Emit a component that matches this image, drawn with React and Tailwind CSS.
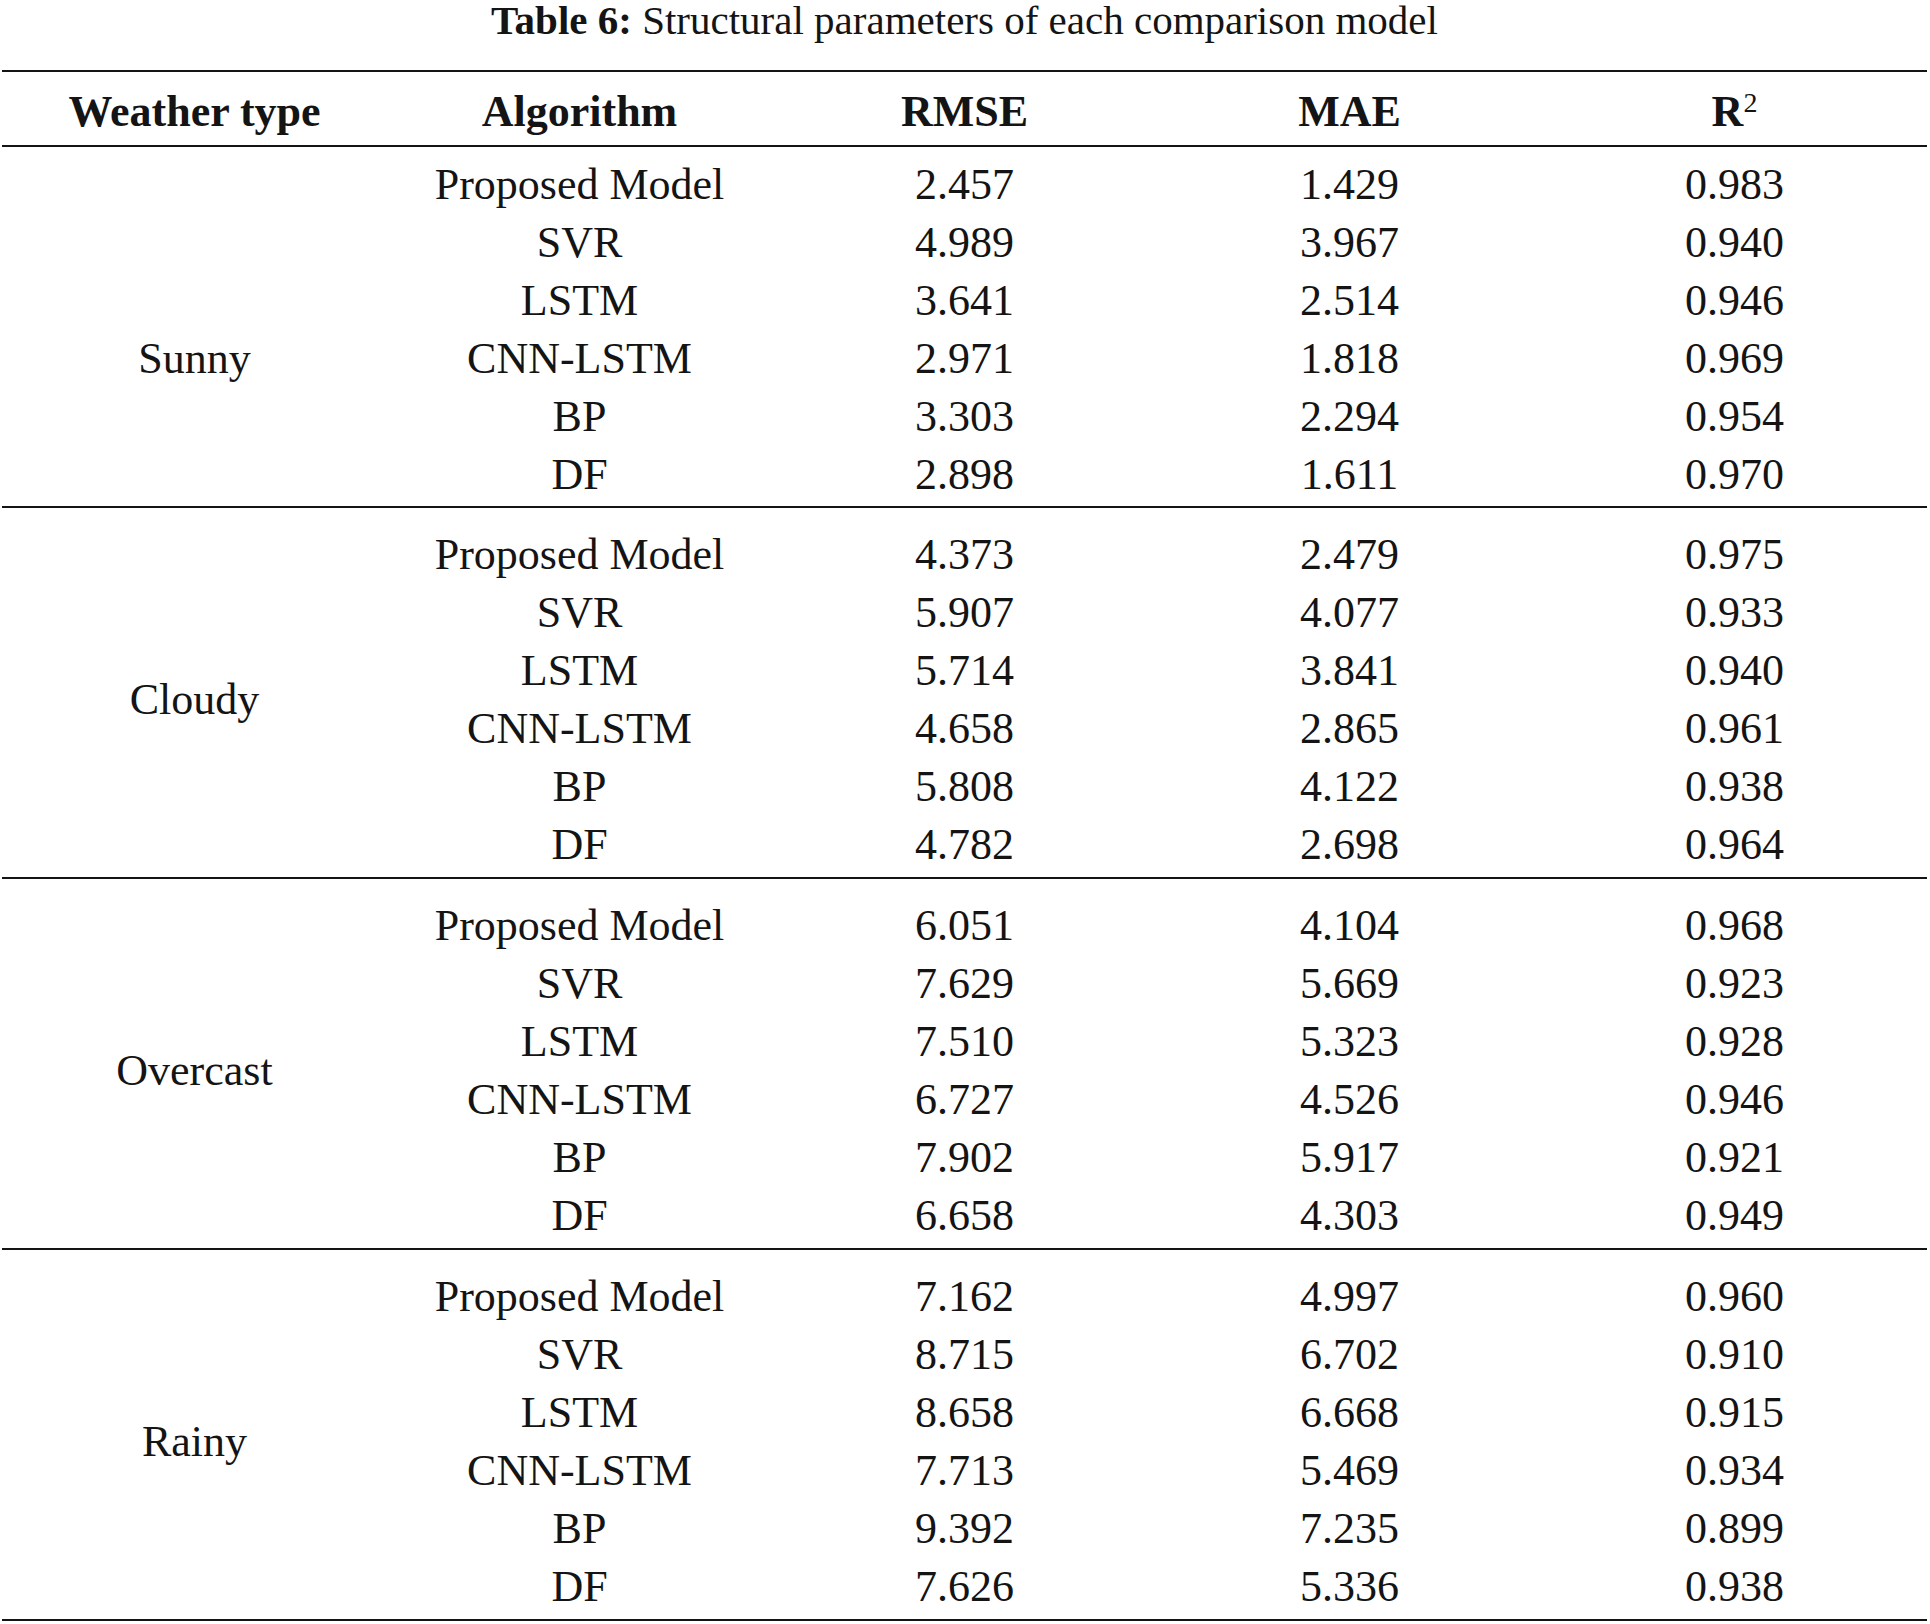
import React from "react";

const groups = [
  {
    name: "Sunny",
    rows: [
      ["Proposed Model", "2.457", "1.429", "0.983"],
      ["SVR", "4.989", "3.967", "0.940"],
      ["LSTM", "3.641", "2.514", "0.946"],
      ["CNN-LSTM", "2.971", "1.818", "0.969"],
      ["BP", "3.303", "2.294", "0.954"],
      ["DF", "2.898", "1.611", "0.970"],
    ],
  },
  {
    name: "Cloudy",
    rows: [
      ["Proposed Model", "4.373", "2.479", "0.975"],
      ["SVR", "5.907", "4.077", "0.933"],
      ["LSTM", "5.714", "3.841", "0.940"],
      ["CNN-LSTM", "4.658", "2.865", "0.961"],
      ["BP", "5.808", "4.122", "0.938"],
      ["DF", "4.782", "2.698", "0.964"],
    ],
  },
  {
    name: "Overcast",
    rows: [
      ["Proposed Model", "6.051", "4.104", "0.968"],
      ["SVR", "7.629", "5.669", "0.923"],
      ["LSTM", "7.510", "5.323", "0.928"],
      ["CNN-LSTM", "6.727", "4.526", "0.946"],
      ["BP", "7.902", "5.917", "0.921"],
      ["DF", "6.658", "4.303", "0.949"],
    ],
  },
  {
    name: "Rainy",
    rows: [
      ["Proposed Model", "7.162", "4.997", "0.960"],
      ["SVR", "8.715", "6.702", "0.910"],
      ["LSTM", "8.658", "6.668", "0.915"],
      ["CNN-LSTM", "7.713", "5.469", "0.934"],
      ["BP", "9.392", "7.235", "0.899"],
      ["DF", "7.626", "5.336", "0.938"],
    ],
  },
];

function Group({ g, first }) {
  return (
    <div className={first ? "grid grid-cols-5 pt-[9px] pb-[2px]" : "grid grid-cols-5 pt-[18px] pb-[3px]"}>
      <div className={first ? "flex items-center justify-center pt-[58px]" : "flex items-center justify-center"}>
        <span className="leading-[58px]">{g.name}</span>
      </div>
      <div className="col-span-4 flex flex-col">
        {g.rows.map((r, i) => (
          <div key={i} className="grid grid-cols-4 h-[58px] leading-[58px] text-center">
            {r.map((c, j) => (
              <div key={j}>{c}</div>
            ))}
          </div>
        ))}
      </div>
    </div>
  );
}

export default function App() {
  return (
    <div
      className="w-[1930px] h-[1624px] bg-white text-[#141414] pl-[2px] pr-[3px] overflow-hidden"
      style={{ fontFamily: '"Liberation Serif", "Times New Roman", serif' }}
    >
      <div className="text-center text-[41px] leading-[40px] h-[40px]">
        <span className="font-bold">Table 6:</span> Structural parameters of each comparison model
      </div>
      <div className="mt-[30px] border-t-2 border-[#141414]" />
      <div className="grid grid-cols-5 text-center font-bold text-[44px] pt-[7px] h-[73px] leading-[66px]">
        <div>Weather type</div>
        <div>Algorithm</div>
        <div>RMSE</div>
        <div>MAE</div>
        <div>
          R<sup className="font-normal text-[28px]">2</sup>
        </div>
      </div>
      <div className="border-t-2 border-[#141414]" />
      <div className="text-[44px]">
        {groups.map((g, i) => (
          <div key={g.name}>
            <Group g={g} first={i === 0} />
            <div className="border-t-2 border-[#141414]" />
          </div>
        ))}
      </div>
    </div>
  );
}
